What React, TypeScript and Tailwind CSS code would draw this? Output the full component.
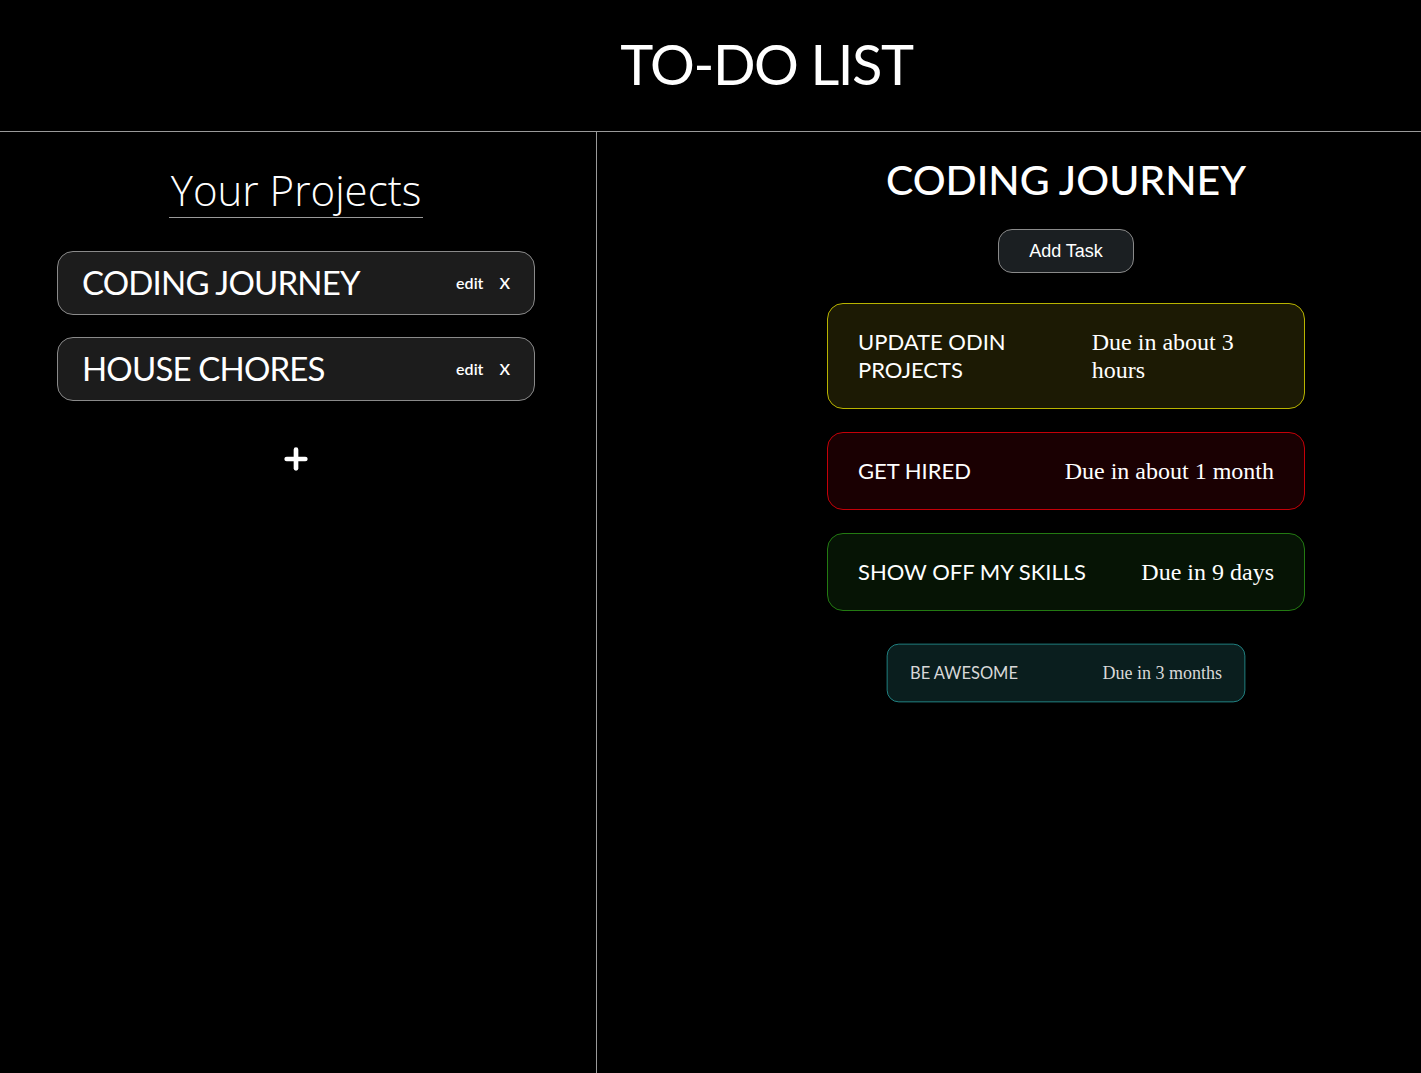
import { Plus } from "lucide-react";

type Task = {
  title: string;
  due: string;
  box: string;
  small?: boolean;
};

const tasks: Task[] = [
  {
    title: "UPDATE ODIN PROJECTS",
    due: "Due in about 3 hours",
    box: "bg-[#1c1a04] border-[#b8b400]",
  },
  {
    title: "GET HIRED",
    due: "Due in about 1 month",
    box: "bg-[#1a0002] border-[#c40008]",
  },
  {
    title: "SHOW OFF MY SKILLS",
    due: "Due in 9 days",
    box: "bg-[#061405] border-[#237a12]",
  },
  {
    title: "BE AWESOME",
    due: "Due in 3 months",
    box: "bg-[#0a1e1e] border-[#2aa5a5] text-[#d8d8d8]",
    small: true,
  },
];

const projects = ["CODING JOURNEY", "HOUSE CHORES"];

const sans = "font-['Lato','Noto_Sans',sans-serif]";

function ProjectCard({ name }: { name: string }) {
  return (
    <div className="w-[478px] h-[64px] flex items-center justify-between pl-6 pr-6 rounded-2xl border border-[#8a8a8a] bg-[#1c1c1c]">
      <span className={`${sans} text-[33px] tracking-tight`}>{name}</span>
      <div className={`flex items-center gap-4 text-[16px] font-semibold ${sans}`}>
        <span>edit</span>
        <span>X</span>
      </div>
    </div>
  );
}

function TaskCard({ task }: { task: Task }) {
  return (
    <div
      className={`w-[478px] flex items-center justify-between px-[30px] py-6 rounded-2xl border ${task.box} ${
        task.small ? "scale-75" : ""
      }`}
    >
      <span className={`${sans} text-[22px] leading-7`}>{task.title}</span>
      <span className="font-['Liberation_Serif',serif] text-[24px] leading-7">
        {task.due}
      </span>
    </div>
  );
}

export default function App() {
  return (
    <div className="min-h-[1073px] flex flex-col bg-black text-white">
      <header className="h-[132px] flex justify-center pl-[112px] pt-[28px] border-b border-[#9a9a9a]">
        <h1 className={`${sans} text-[56px] leading-[72px] tracking-tight`}>TO-DO LIST</h1>
      </header>
      <main className="flex flex-1">
        <aside className="w-[597px] flex flex-col items-center pt-[31px] pr-[4px] border-r border-[#9a9a9a]">
          <h2 className="font-['Open_Sans',sans-serif] font-light text-[42px] leading-[54px] border-b border-[#9a9a9a] px-0.5">
            Your Projects
          </h2>
          <div className="mt-[33px] flex flex-col gap-[22px]">
            {projects.map((p) => (
              <ProjectCard key={p} name={p} />
            ))}
          </div>
          <Plus className="mt-[42px] w-8 h-8" strokeWidth={3.5} />
        </aside>
        <section className="flex-1 flex flex-col items-center pl-[114px] pt-[26px]">
          <h2 className={`${sans} font-medium text-[41px] leading-[44px]`}>CODING JOURNEY</h2>
          <button className="mt-[27px] w-[136px] h-[44px] rounded-[14px] border border-[#8a8a8a] bg-[#1b1f22] text-[18px] font-['Liberation_Sans',sans-serif]">
            Add Task
          </button>
          <div className="mt-[30px] flex flex-col items-center gap-[23px]">
            {tasks.map((t) => (
              <TaskCard key={t.title} task={t} />
            ))}
          </div>
        </section>
      </main>
    </div>
  );
}
